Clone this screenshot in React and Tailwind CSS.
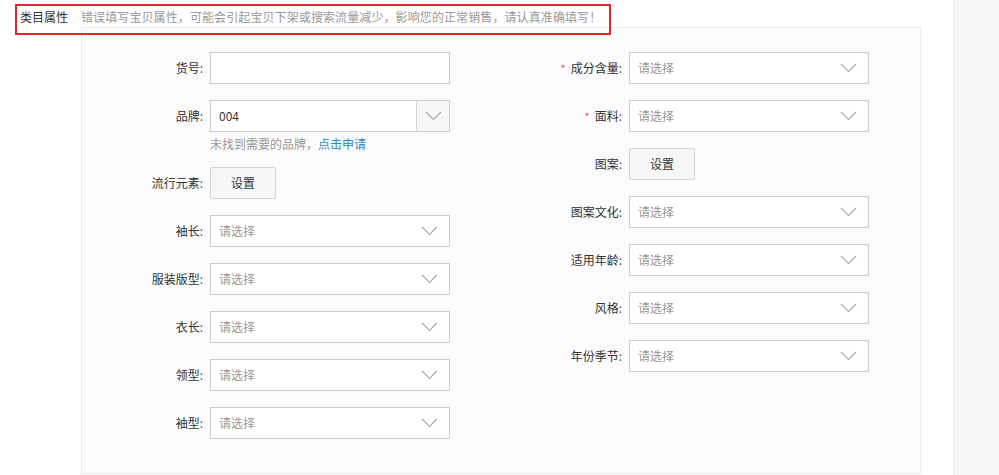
import React from "react";

const font = { fontFamily: '"Noto Sans CJK SC", "Liberation Sans", sans-serif' };

const Chevron = () => (
  <svg width="17" height="10" viewBox="0 0 17 10" className="shrink-0">
    <polyline points="1,1 8.5,8.5 16,1" fill="none" stroke="#a8a8a8" strokeWidth="1.1" />
  </svg>
);

const Label = ({ text, required, width }) => (
  <div className={`${width} shrink-0 text-right text-[12px] text-[#333] leading-[32px] pr-[7px]`}>
    {required && <span className="text-[#f05a5a] mr-[5px] text-[11px] align-top">*</span>}
    {text}
    <span className="text-[#555]">:</span>
  </div>
);

const Select = ({ value }) => (
  <div className="w-[240px] h-[32px] border border-[#cccccc] bg-white flex items-center justify-between pl-[8px] pr-[11px]">
    <span className={`text-[12px] ${value ? "text-[#333]" : "text-[#999]"}`}>{value || "请选择"}</span>
    <Chevron />
  </div>
);

const TextInput = () => <div className="w-[240px] h-[32px] border border-[#cccccc] bg-white" />;

const SetButton = () => (
  <div className="w-[66px] h-[32px] border border-[#d4d4d4] rounded-[2px] bg-[#f6f7f9] flex items-center justify-center text-[12px] text-[#333]">
    设置
  </div>
);

const Row = ({ label, required, width, children, className = "mb-[16px]" }) => (
  <div className={`flex items-start ${className}`}>
    <Label text={label} required={required} width={width} />
    {children}
  </div>
);

const leftRows = ["袖长", "服装版型", "衣长", "领型", "袖型"];
const rightRows = ["图案文化", "适用年龄", "风格", "年份季节"];

export default function App() {
  return (
    <div className="relative w-[999px] h-[475px] bg-white flex overflow-hidden" style={font}>
      <div className="w-[953px] shrink-0 flex flex-col">
        <div className="h-[27px] flex items-start pl-[20px] pt-[8px] text-[12px] leading-[18px]">
          <span className="text-[#333] w-[61px] shrink-0">类目属性</span>
          <span className="text-[#999] tracking-[0.1px]">错误填写宝贝属性，可能会引起宝贝下架或搜索流量减少，影响您的正常销售，请认真准确填写！</span>
        </div>
        <div className="ml-[81px] w-[840px] h-[447px] border border-[#ececec] bg-[#fbfbfb] flex pt-[24px]">
          <div className="w-[368px] shrink-0">
            <Row label="货号" width="w-[128px]">
              <TextInput />
            </Row>
            <Row label="品牌" width="w-[128px]" className="mb-[14px]">
              <div>
                <div className="w-[240px] h-[32px] border border-[#cccccc] bg-white flex">
                  <div className="flex-1 flex items-center pl-[8px] text-[12px] text-[#333]">004</div>
                  <div className="w-[33px] border-l border-[#d6d6d6] bg-[#f7f7f7] flex items-center justify-center">
                    <Chevron />
                  </div>
                </div>
                <div className="mt-[3px] text-[12px] leading-[18px] text-[#999]">
                  未找到需要的品牌，<span className="text-[#2f87d0]">点击申请</span>
                </div>
              </div>
            </Row>
            <Row label="流行元素" width="w-[128px]">
              <SetButton />
            </Row>
            {leftRows.map((l) => (
              <Row key={l} label={l} width="w-[128px]">
                <Select />
              </Row>
            ))}
          </div>
          <div className="ml-[51px]">
            <Row label="成分含量" required width="w-[128px]">
              <Select />
            </Row>
            <Row label="面料" required width="w-[128px]">
              <Select />
            </Row>
            <Row label="图案" width="w-[128px]">
              <SetButton />
            </Row>
            {rightRows.map((l) => (
              <Row key={l} label={l} width="w-[128px]">
                <Select />
              </Row>
            ))}
          </div>
        </div>
      </div>
      <div className="flex-1 bg-[#f6f6f8] border-l border-[#efefef]" />
      <div className="absolute left-[15px] top-[4px] w-[596px] h-[31px] border-2 border-[#e3262c] pointer-events-none" />
    </div>
  );
}
